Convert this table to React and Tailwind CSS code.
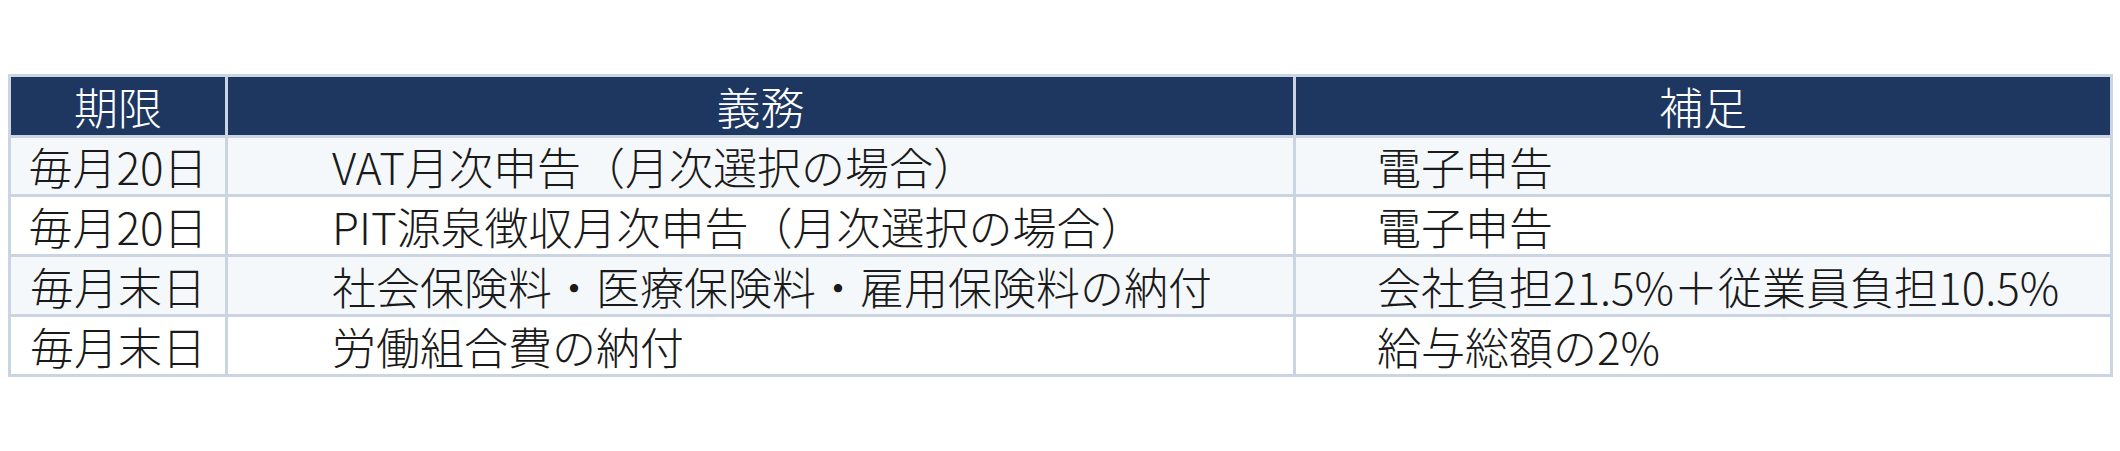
const rows = [
  { due: '毎月20日', duty: 'VAT月次申告（月次選択の場合）', note: '電子申告' },
  { due: '毎月20日', duty: 'PIT源泉徴収月次申告（月次選択の場合）', note: '電子申告' },
  { due: '毎月末日', duty: '社会保険料・医療保険料・雇用保険料の納付', note: '会社負担21.5%＋従業員負担10.5%' },
  { due: '毎月末日', duty: '労働組合費の納付', note: '給与総額の2%' },
];

export default function App() {
  return (
    <div className="w-[2120px] h-[451px] bg-white pt-[74px] pl-[8px] font-['Noto_Sans_CJK_JP_Light','Noto_Sans_CJK_JP_DemiLight','Noto_Sans_CJK_JP','Noto_Sans',sans-serif] font-light text-[44px] leading-none text-[#1a1a1a]">
      <div className="grid w-[2105px] grid-cols-[214px_1065px_814px] grid-rows-[58px_56px_57px_57px_57px] gap-[3px] border-[3px] border-[#cbd5e1] bg-[#cbd5e1]">
        <div className="flex items-center justify-center bg-[#1d3760] text-white">期限</div>
        <div className="flex items-center justify-center bg-[#1d3760] text-white">義務</div>
        <div className="flex items-center justify-center bg-[#1d3760] text-white">補足</div>
        {rows.map((row, i) => {
          const bg = i % 2 === 0 ? 'bg-[#f5f8fb]' : 'bg-white';
          return [
            <div key={`a${i}`} className={`flex items-center justify-center ${bg}`}>{row.due}</div>,
            <div key={`b${i}`} className={`flex items-center pl-[104px] whitespace-nowrap ${bg}`}>{row.duty}</div>,
            <div key={`c${i}`} className={`flex items-center pl-[81px] whitespace-nowrap ${bg}`}>{row.note}</div>,
          ];
        })}
      </div>
    </div>
  );
}
